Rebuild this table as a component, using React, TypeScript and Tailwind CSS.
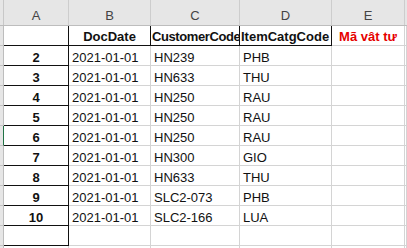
import React from "react";

const rows = [
  { n: "2", date: "2021-01-01", cust: "HN239", cat: "PHB" },
  { n: "3", date: "2021-01-01", cust: "HN633", cat: "THU" },
  { n: "4", date: "2021-01-01", cust: "HN250", cat: "RAU" },
  { n: "5", date: "2021-01-01", cust: "HN250", cat: "RAU" },
  { n: "6", date: "2021-01-01", cust: "HN250", cat: "RAU" },
  { n: "7", date: "2021-01-01", cust: "HN300", cat: "GIO" },
  { n: "8", date: "2021-01-01", cust: "HN633", cat: "THU" },
  { n: "9", date: "2021-01-01", cust: "SLC2-073", cat: "PHB" },
  { n: "10", date: "2021-01-01", cust: "SLC2-166", cat: "LUA" },
];

const base =
  "flex h-full shrink-0 items-end overflow-hidden whitespace-nowrap border-b border-r leading-[13px]";

function Strip({ active }: { active?: boolean }) {
  return (
    <div
      className={`h-full w-[4px] shrink-0 border-b border-r bg-[#e6e6e6] border-b-[#c4c4c4] ${
        active ? "border-r-[#217346]" : "border-r-[#bdbdbd]"
      }`}
    />
  );
}

function HeaderRow() {
  const letters = [
    { l: "A", w: "w-[65px]" },
    { l: "B", w: "w-[82px]" },
    { l: "C", w: "w-[89px]" },
    { l: "D", w: "w-[92px]" },
    { l: "E", w: "w-[73px]" },
  ];
  return (
    <div className="flex h-[26px] border-b border-[#bdbdbd] bg-[#e6e6e6]">
      <div className="h-full w-[4px] shrink-0 border-r border-[#c8c8c8]" />
      {letters.map((c) => (
        <div
          key={c.l}
          className={`flex h-full shrink-0 items-end justify-center border-r border-[#cdcdcd] pb-[3px] leading-[13px] text-[#444] ${c.w}`}
        >
          {c.l}
        </div>
      ))}
      <div className="h-full flex-1" />
    </div>
  );
}

export default function App() {
  return (
    <div className="h-[248px] w-[407px] overflow-hidden bg-white font-['Liberation_Sans',Arial,sans-serif] text-[13px] text-[#111]">
      <HeaderRow />

      {/* row 1: titles */}
      <div className="flex h-[20px]">
        <Strip />
        <div className={`${base} w-[65px] border-[#111]`} />
        <div className={`${base} w-[82px] justify-center border-[#111] pb-[2px] font-bold`}>DocDate</div>
        <div className={`${base} w-[89px] border-[#111] pb-[2px] pl-[1px] font-bold tracking-[-0.4px]`}>
          CustomerCode
        </div>
        <div className={`${base} w-[92px] border-[#111] pb-[2px] pl-[1px] font-bold`}>ItemCatgCode</div>
        <div className={`${base} w-[73px] justify-center border-[#d4d4d4] pb-[2px] font-bold text-[#e60000]`}>
          Mã vât tư
        </div>
        <div className={`${base} flex-1 shrink border-[#d4d4d4]`} />
      </div>

      {rows.map((r) => (
        <div key={r.n} className="flex h-[20px]">
          <Strip active={r.n === "6"} />
          <div className={`${base} w-[65px] justify-center border-[#111] pb-[1px] font-bold`}>{r.n}</div>
          <div className={`${base} w-[82px] border-[#d4d4d4] pb-[1px] pl-[3px]`}>{r.date}</div>
          <div className={`${base} w-[89px] border-[#d4d4d4] pb-[1px] pl-[3px]`}>{r.cust}</div>
          <div className={`${base} w-[92px] border-[#d4d4d4] pb-[1px] pl-[3px]`}>{r.cat}</div>
          <div className={`${base} w-[73px] border-[#d4d4d4]`} />
          <div className={`${base} flex-1 shrink border-[#d4d4d4]`} />
        </div>
      ))}

      {/* empty rows */}
      {[11, 12].map((n) => (
        <div key={n} className="flex h-[20px]">
          <Strip />
          <div className={`${base} w-[65px] ${n === 11 ? "border-[#111]" : "border-[#d4d4d4]"}`} />
          <div className={`${base} w-[82px] border-[#d4d4d4]`} />
          <div className={`${base} w-[89px] border-[#d4d4d4]`} />
          <div className={`${base} w-[92px] border-[#d4d4d4]`} />
          <div className={`${base} w-[73px] border-[#d4d4d4]`} />
          <div className={`${base} flex-1 shrink border-[#d4d4d4]`} />
        </div>
      ))}
    </div>
  );
}
